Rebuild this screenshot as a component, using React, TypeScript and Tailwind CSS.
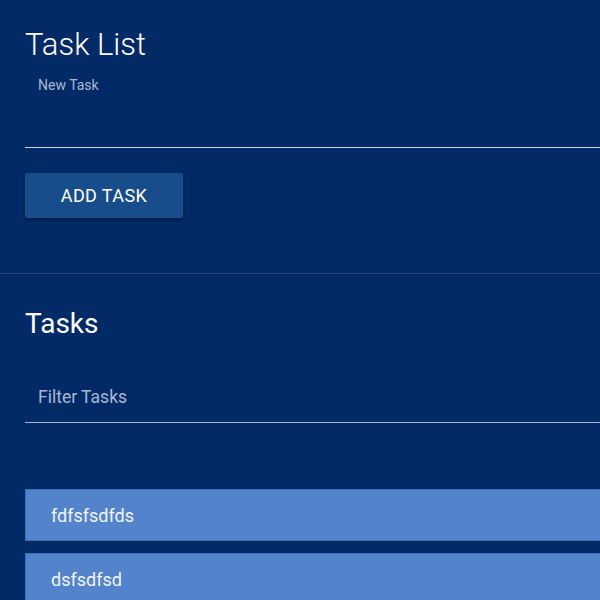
export default function App() {
  const tasks = ['fdfsfsdfds', 'dsfsdfsd'];

  return (
    <div className="min-h-[600px] w-full overflow-hidden bg-[#022a66] font-['Roboto',sans-serif] text-white">
      {/* New task form */}
      <div className="pl-[25px] pt-[27px]">
        <h1 className="text-[31px] font-light leading-[36px]">Task List</h1>
        <div className="mt-[14px] w-[600px] border-b border-[#c9d3e3]">
          <label className="block pl-[13px] text-[14px] leading-[17px] text-[#a9b8d2]">New Task</label>
          <div className="h-[53px]" />
        </div>
        <button className="mt-[25px] h-[45px] w-[158px] rounded-[2px] bg-[#174d8a] text-[18px] font-normal tracking-[0.4px] shadow-[0_2px_3px_rgba(0,0,0,0.35)]">
          ADD TASK
        </button>
      </div>

      <div className="mt-[55px] h-px bg-[#1f4479]" />

      {/* Task list */}
      <div className="pl-[25px] pt-[34px]">
        <h2 className="text-[28px] font-normal leading-[32px]">Tasks</h2>
        <div className="mt-[47px] w-[600px] border-b border-[#a9b7d0] pb-[15px]">
          <span className="block pl-[13px] text-[17.5px] leading-[20px] text-[#a9b8d2]">Filter Tasks</span>
        </div>
        <ul className="mt-[66px] flex flex-col gap-[12px]">
          {tasks.map((t) => (
            <li
              key={t}
              className="flex h-[52px] w-[600px] items-center border border-[#3f6fb4] bg-[#5283cb] pl-[25px] text-[18px] font-normal text-[#f2f5fb]"
            >
              {t}
            </li>
          ))}
        </ul>
      </div>
    </div>
  );
}
